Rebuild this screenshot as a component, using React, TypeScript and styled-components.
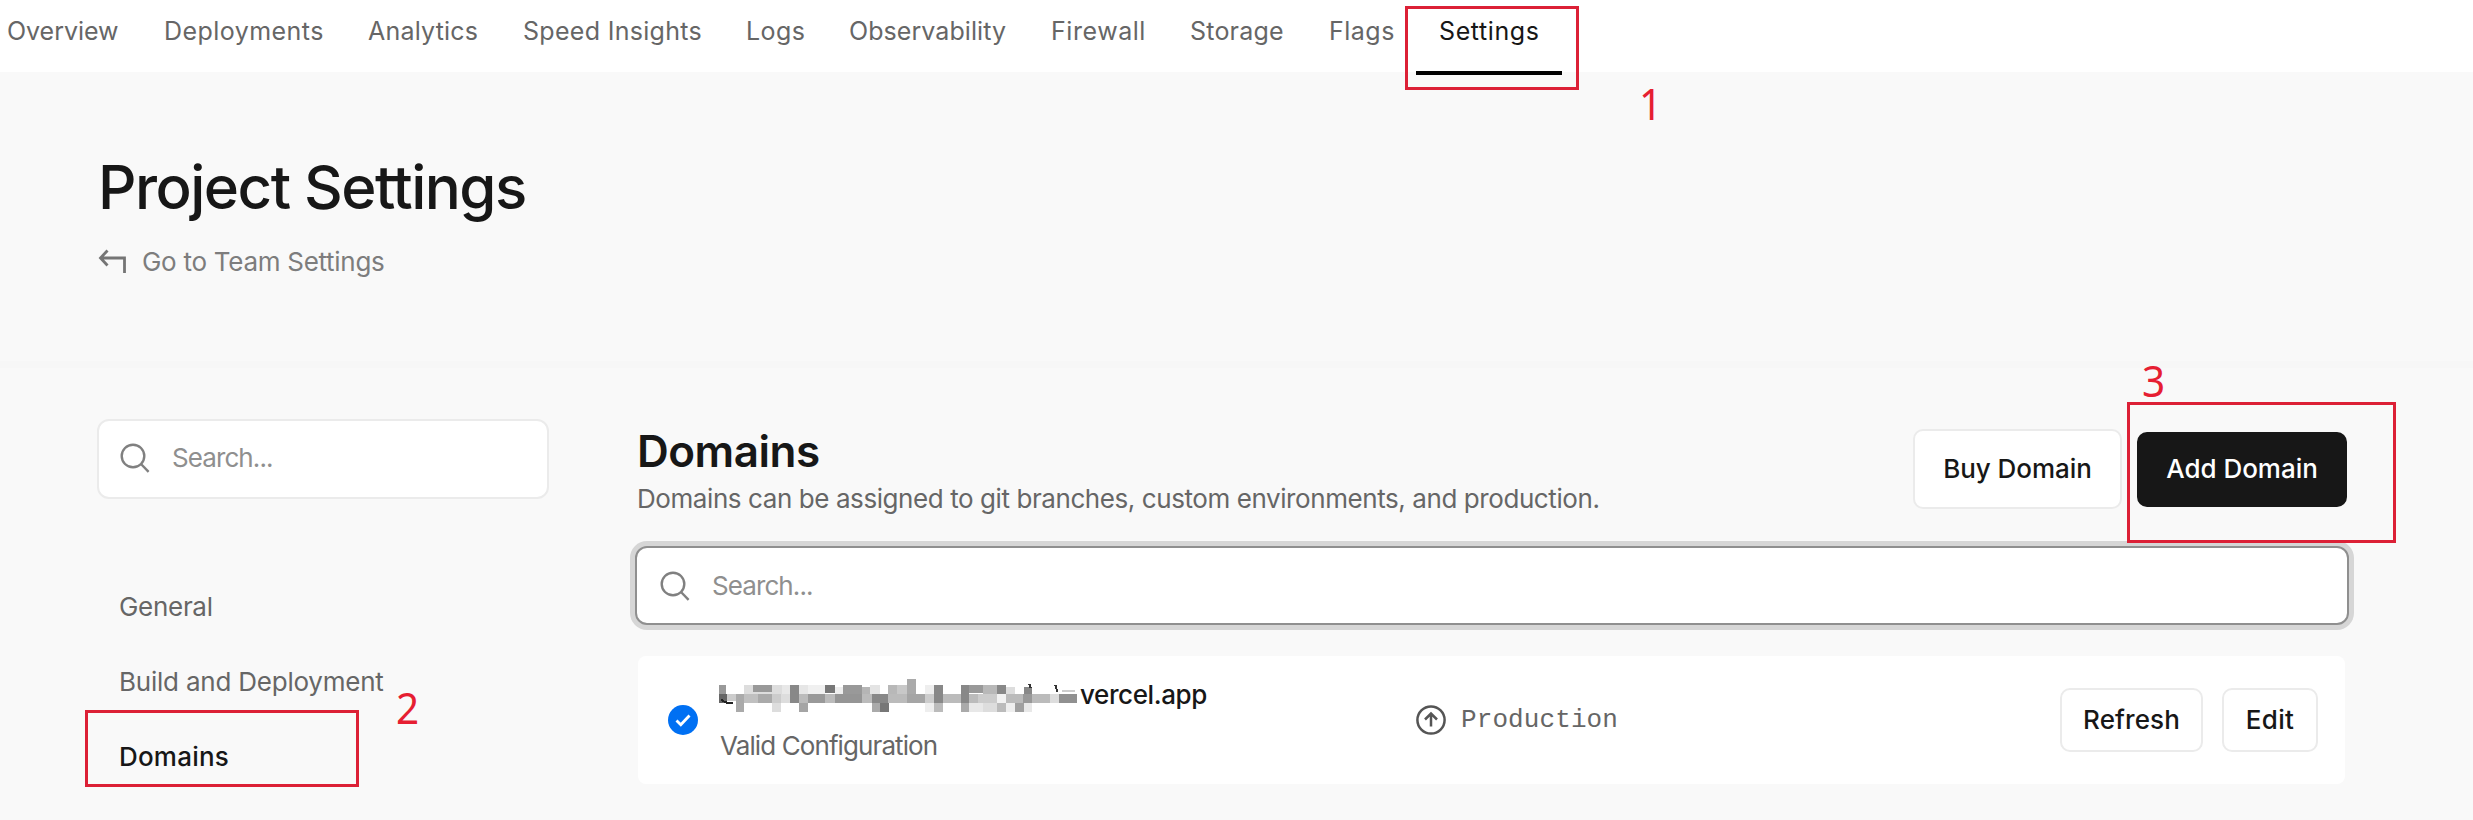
import React from 'react';
import styled, { createGlobalStyle } from 'styled-components';

const GlobalStyle = createGlobalStyle`
  * { box-sizing: border-box; }
  body { margin: 0; background: #f9f9f9; }
`;

const Page = styled.div`
  position: relative;
  width: 2473px;
  height: 820px;
  overflow: hidden;
  background: #f9f9f9;
  color: #171717;
  font: 400 26px/40px Inter, "Liberation Sans", sans-serif;
  white-space: nowrap;
`;

const Label = styled.span<{ $ls: number }>`
  letter-spacing: ${(p) => p.$ls}px;
`;

/* Top navigation */
const TopNav = styled.nav`
  display: flex;
  height: 72px;
  padding-left: 7px;
  background: #fff;
`;
const Tab = styled.a<{ $width: number; $active?: boolean }>`
  position: relative;
  flex: none;
  width: ${(p) => p.$width}px;
  height: 62px;
  font-size: 25px;
  line-height: 62px;
  color: ${(p) => (p.$active ? '#171717' : '#666')};
  ${(p) =>
    p.$active &&
    `&::after {
      content: '';
      position: absolute;
      left: -23px;
      top: 71px;
      width: 146px;
      height: 4px;
      background: #000;
    }`}
`;

/* Page heading */
const Hero = styled.header`
  height: 289px;
  padding: 80px 0 0 98px;
`;
const Title = styled.h1`
  margin: 0;
  font-size: 60px;
  font-weight: 500;
  line-height: 70px;
`;
const TeamLink = styled.a`
  display: flex;
  align-items: center;
  gap: 14px;
  margin-top: 20px;
  color: #7d7d7d;
`;
const Divider = styled.div`
  height: 7px;
  background: #f7f7f7;
`;

/* Body columns */
const Columns = styled.div`
  display: flex;
  gap: 86px;
  padding-left: 97px;
`;
const Sidebar = styled.aside`
  width: 452px;
  padding-top: 51px;
`;
const SearchBox = styled.label<{ $focused?: boolean }>`
  display: flex;
  align-items: center;
  gap: 22px;
  height: ${(p) => (p.$focused ? 79 : 80)}px;
  padding: 0 0 ${(p) => (p.$focused ? 0 : 2)}px ${(p) => (p.$focused ? 23 : 21)}px;
  background: #fff;
  border: 2px solid ${(p) => (p.$focused ? '#8f8f8f' : '#ebebeb')};
  border-radius: 12px;
  color: #8f8f8f;
  ${(p) => p.$focused && 'box-shadow: 0 0 0 5px #d6d6d6;'}
`;
const SideList = styled.ul`
  margin: 70px 0 0;
  padding: 0 0 0 22px;
  list-style: none;
`;
const SideItem = styled.li<{ $active?: boolean }>`
  height: 75px;
  line-height: 75px;
  color: ${(p) => (p.$active ? '#171717' : '#666')};
  font-weight: ${(p) => (p.$active ? 450 : 400)};
`;

const Main = styled.main`
  width: 1714px;
`;
const SectionHead = styled.div`
  display: flex;
  justify-content: space-between;
  height: 178px;
  padding: 58px 2px 0 2px;
`;
const SectionTitle = styled.h2`
  margin: 0;
  font-size: 44px;
  font-weight: 600;
  line-height: 50px;
`;
const Description = styled.p`
  margin: 3px 0 0;
  color: #666;
`;
const Actions = styled.div`
  display: flex;
  align-items: center;
  gap: 15px;
  height: 84px;
  margin-top: 1px;
`;
const Button = styled.button<{ $width: number; $height: number; $dark?: boolean }>`
  width: ${(p) => p.$width}px;
  height: ${(p) => p.$height}px;
  padding: 0;
  border: 2px solid ${(p) => (p.$dark ? '#171717' : '#ebebeb')};
  border-radius: 10px;
  background: ${(p) => (p.$dark ? '#171717' : '#fff')};
  color: ${(p) => (p.$dark ? '#fff' : '#171717')};
  font: 470 26px/40px Inter, "Liberation Sans", sans-serif;
`;

/* Domain entry */
const DomainCard = styled.section`
  display: grid;
  grid-template-columns: 50px 698px 1fr auto;
  align-items: center;
  width: 1707px;
  height: 128px;
  margin: 31px 0 0 3px;
  padding: 0 27px 0 30px;
  border-radius: 8px;
  background: #fff;
`;
const DomainName = styled.div`
  display: flex;
  height: 51px;
  font-weight: 450;
  line-height: 51px;
`;
const DomainStatus = styled.div`
  height: 51px;
  padding-left: 2px;
  line-height: 51px;
  color: #666;
`;
const Environment = styled.div`
  display: flex;
  align-items: center;
  gap: 15px;
  color: #666;
  font-family: "Liberation Mono", monospace;
`;
const RowActions = styled.div`
  display: flex;
  gap: 19px;
`;

/* Red annotations on top of the page */
const Marker = styled.div<{ $x: number; $y: number; $w: number; $h: number }>`
  position: absolute;
  left: ${(p) => p.$x}px;
  top: ${(p) => p.$y}px;
  width: ${(p) => p.$w}px;
  height: ${(p) => p.$h}px;
  border: 3px solid #dc2036;
`;
const MarkerNumber = styled.span<{ $x: number; $y: number }>`
  position: absolute;
  left: ${(p) => p.$x}px;
  top: ${(p) => p.$y}px;
  color: #e61e32;
  font: 400 44px/44px "Noto Sans", sans-serif;
  transform: scaleX(0.92);
`;

const SearchIcon = () => (
  <svg width="30" height="30" viewBox="0 0 30 30" fill="none" stroke="#808080" strokeWidth="2.4">
    <circle cx="13" cy="13" r="11.3" />
    <path d="M21 21l7.6 7.8" />
  </svg>
);

const ReturnIcon = () => (
  <svg width="30" height="26" viewBox="0 0 30 26" fill="none" stroke="#757575" strokeWidth="2.8">
    <path d="M9.5 1.5L2.5 9l7 7.5M2.5 9H26.5v15" />
  </svg>
);

const CheckIcon = () => (
  <svg width="30" height="30" viewBox="0 0 30 30" fill="none">
    <circle cx="15" cy="15" r="15" fill="#0070f3" />
    <path d="M8.5 15.5l4.3 4.3 8.7-9.3" stroke="#fff" strokeWidth="2.8" />
  </svg>
);

const ProductionIcon = () => (
  <svg width="30" height="30" viewBox="0 0 30 30" fill="none" stroke="#555" strokeWidth="2.5">
    <circle cx="15" cy="15" r="13.6" />
    <path d="M15 21.5V9.5M9 14.5l6-6 6 6" />
  </svg>
);

/* Pixelated blocks hiding the domain prefix: x, y, width, height, grey */
const blocks: [number, number, number, number, string][] = [
  [28, 45, 20, 27, '#999'], [103, 45, 27, 27, '#ddd'], [130, 45, 55, 22, '#999'], [185, 45, 30, 27, '#ddd'],
  [130, 67, 55, 6, '#ddd'], [215, 45, 25, 27, '#e8e8e8'], [240, 45, 28, 27, '#888'], [268, 45, 27, 27, '#e6e6e6'],
  [295, 45, 50, 27, '#f0f0f0'], [345, 45, 30, 24, '#777'], [375, 52, 25, 20, '#eee'], [400, 45, 55, 27, '#999'],
  [455, 52, 25, 20, '#b5b5b5'], [480, 45, 30, 27, '#e4e4e4'], [535, 45, 25, 27, '#b8b8b8'], [560, 45, 30, 27, '#c8c8c8'],
  [590, 28, 27, 44, '#aaa'], [645, 45, 27, 27, '#eee'], [672, 45, 26, 27, '#888'], [752, 45, 26, 27, '#888'],
  [778, 45, 42, 24, '#999'], [820, 45, 40, 27, '#b8b8b8'], [860, 45, 28, 27, '#888'], [888, 50, 27, 22, '#ddd'],
  [942, 50, 25, 22, '#888'], [28, 72, 22, 26, '#666'], [50, 72, 27, 20, '#ccc'], [77, 72, 26, 26, '#aaa'],
  [103, 72, 42, 26, '#c0c0c0'], [145, 72, 40, 26, '#aaa'], [185, 72, 28, 26, '#ccc'], [213, 72, 27, 26, '#ddd'],
  [240, 72, 28, 26, '#888'], [268, 72, 25, 26, '#bbb'], [293, 72, 52, 26, '#999'], [345, 72, 30, 26, '#bbb'],
  [375, 72, 80, 26, '#959595'], [455, 72, 30, 26, '#bbb'], [485, 72, 50, 26, '#888'], [535, 72, 55, 26, '#bbb'],
  [590, 72, 55, 26, '#a5a5a5'], [645, 72, 27, 26, '#ccc'], [672, 72, 26, 26, '#888'], [698, 72, 54, 26, '#bbb'],
  [752, 72, 26, 26, '#888'], [778, 72, 27, 26, '#bbb'], [805, 72, 55, 26, '#ccc'], [860, 72, 28, 26, '#f2f2f2'],
  [888, 72, 52, 26, '#bbb'], [940, 72, 27, 26, '#999'], [967, 72, 53, 26, '#bbb'], [1020, 72, 28, 26, '#ddd'],
  [1048, 72, 54, 26, '#909090'], [77, 98, 26, 27, '#aaa'], [185, 98, 28, 27, '#ddd'], [268, 98, 25, 27, '#a5a5a5'],
  [485, 98, 25, 27, '#aaa'], [510, 98, 27, 27, '#777'], [645, 98, 27, 27, '#eee'], [672, 98, 26, 27, '#bbb'],
  [752, 98, 26, 27, '#aaa'], [778, 98, 42, 27, '#e8e8e8'], [820, 98, 40, 27, '#ddd'], [860, 98, 28, 27, '#bbb'],
  [888, 98, 27, 27, '#eee'], [915, 98, 27, 27, '#a0a0a0'], [942, 98, 25, 27, '#e8e8e8'],
];

const Redaction = () => (
  <svg width="362" height="51" viewBox="0 0 362 51" shapeRendering="crispEdges">
    <g transform="translate(-8 1) scale(0.3333)">
      {blocks.map(([x, y, w, h, fill], i) => (
        <rect key={i} x={x} y={y} width={w} height={h} fill={fill} />
      ))}
      <path d="M34 86q8 16 36 12" stroke="#222" strokeWidth="6" fill="none" />
      <path d="M1036 44l6 22M958 42l4 12" stroke="#333" strokeWidth="6" />
      <path d="M1056 64h40" stroke="#ccc" strokeWidth="5" />
    </g>
  </svg>
);

const tabs: [string, number, number][] = [
  ['Overview', 157, -0.04],
  ['Deployments', 204, 0.45],
  ['Analytics', 155, 0.2],
  ['Speed Insights', 223, 0.3],
  ['Logs', 103, 0.4],
  ['Observability', 202, 0.07],
  ['Firewall', 139, 0.55],
  ['Storage', 139, 0.21],
  ['Flags', 110, 0.5],
  ['Settings', 100, 0.6],
];

export default function App() {
  return (
    <Page>
      <GlobalStyle />
      <TopNav>
        {tabs.map(([name, width, ls]) => (
          <Tab key={name} $width={width} $active={name === 'Settings'}>
            <Label $ls={ls}>{name}</Label>
          </Tab>
        ))}
      </TopNav>
      <Hero>
        <Title><Label $ls={-1.52}>Project Settings</Label></Title>
        <TeamLink>
          <ReturnIcon />
          <Label $ls={-0.28}>Go to Team Settings</Label>
        </TeamLink>
      </Hero>
      <Divider />
      <Columns>
        <Sidebar>
          <SearchBox>
            <SearchIcon />
            <Label $ls={-0.91}>Search...</Label>
          </SearchBox>
          <SideList>
            <SideItem><Label $ls={-0.3}>General</Label></SideItem>
            <SideItem><Label $ls={-0.22}>Build and Deployment</Label></SideItem>
            <SideItem $active><Label $ls={0.2}>Domains</Label></SideItem>
          </SideList>
        </Sidebar>
        <Main>
          <SectionHead>
            <div>
              <SectionTitle><Label $ls={-0.48}>Domains</Label></SectionTitle>
              <Description>
                <Label $ls={-0.42}>
                  Domains can be assigned to git branches, custom environments, and production.
                </Label>
              </Description>
            </div>
            <Actions>
              <Button $width={209} $height={80}><Label $ls={-0.05}>Buy Domain</Label></Button>
              <Button $width={210} $height={75} $dark><Label $ls={-0.03}>Add Domain</Label></Button>
            </Actions>
          </SectionHead>
          <SearchBox $focused>
            <SearchIcon />
            <Label $ls={-0.91}>Search...</Label>
          </SearchBox>
          <DomainCard>
            <CheckIcon />
            <div>
              <DomainName>
                <Redaction />
                <Label $ls={-0.4}>vercel.app</Label>
              </DomainName>
              <DomainStatus><Label $ls={-0.9}>Valid Configuration</Label></DomainStatus>
            </div>
            <Environment>
              <ProductionIcon />
              <Label $ls={0.1}>Production</Label>
            </Environment>
            <RowActions>
              <Button $width={143} $height={64}><Label $ls={0.1}>Refresh</Label></Button>
              <Button $width={96} $height={64}><Label $ls={0.3}>Edit</Label></Button>
            </RowActions>
          </DomainCard>
        </Main>
      </Columns>
      <Marker $x={1405} $y={6} $w={174} $h={84} />
      <MarkerNumber $x={1638} $y={81}>1</MarkerNumber>
      <Marker $x={85} $y={710} $w={274} $h={77} />
      <MarkerNumber $x={395} $y={685}>2</MarkerNumber>
      <Marker $x={2127} $y={402} $w={269} $h={141} />
      <MarkerNumber $x={2141} $y={358}>3</MarkerNumber>
    </Page>
  );
}
